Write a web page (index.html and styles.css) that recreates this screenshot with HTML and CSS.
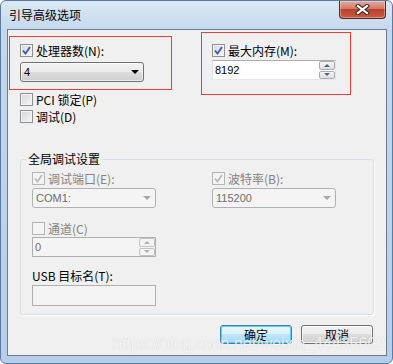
FILE: index.html
```html
<!DOCTYPE html>
<html lang="zh-CN">
  <head>
    <meta charset="UTF-8" />
    <meta name="viewport" content="width=device-width, initial-scale=1.0" />
    <title>引导高级选项</title>
    <link rel="stylesheet" href="styles.css">
  </head>
  <body>
    <div class="window">
      <div class="titlebar">
        <span class="title">引导高级选项</span>
        <span class="close">
          <svg width="15" height="11" viewBox="0 0 15 11">
            <path d="M3 2 L12 9 M12 2 L3 9" stroke="#3b2a2a" stroke-width="4.2" stroke-linecap="square" />
            <path d="M3 2 L12 9 M12 2 L3 9" stroke="#fff" stroke-width="2.2" stroke-linecap="square" />
          </svg>
        </span>
      </div>

      <div class="client">
        <div class="top">
          <div class="col">
            <label class="check">
              <span class="cb"><svg width="9" height="9" viewBox="0 0 9 9"><path d="M1 4.5 L3.5 7.5 L8 1" /></svg></span>
              处理器数(N):
            </label>
            <div class="combo combo-first"><span>4</span><span class="arrow"></span></div>
          </div>
          <div class="col">
            <label class="check">
              <span class="cb"><svg width="9" height="9" viewBox="0 0 9 9"><path d="M1 4.5 L3.5 7.5 L8 1" /></svg></span>
              最大内存(M):
            </label>
            <div class="edit edit-mem">
              <span class="value">8192</span>
              <span class="spin">
                <i class="up"></i>
                <i class="down"></i>
              </span>
            </div>
          </div>
        </div>

        <div class="opts">
          <label class="check"><span class="cb"></span>PCI 锁定(P)</label>
          <label class="check"><span class="cb"></span>调试(D)</label>
        </div>

        <fieldset class="group">
          <legend>全局调试设置</legend>
          <div class="group-row">
            <div class="col">
              <label class="check disabled">
                <span class="cb"><svg width="9" height="9" viewBox="0 0 9 9"><path d="M1 4.5 L3.5 7.5 L8 1" /></svg></span>
                调试端口(E):
              </label>
              <div class="combo disabled"><span>COM1:</span><span class="arrow"></span></div>
            </div>
            <div class="col">
              <label class="check disabled">
                <span class="cb"><svg width="9" height="9" viewBox="0 0 9 9"><path d="M1 4.5 L3.5 7.5 L8 1" /></svg></span>
                波特率(B):
              </label>
              <div class="combo disabled"><span>115200</span><span class="arrow"></span></div>
            </div>
          </div>
          <div class="col col-channel">
            <label class="check disabled"><span class="cb"></span>通道(C)</label>
            <div class="edit disabled edit-channel">
              <span class="value">0</span>
              <span class="spin">
                <i class="up"></i>
                <i class="down"></i>
              </span>
            </div>
          </div>
          <div class="col col-usb">
            <span class="label">USB 目标名(T):</span>
            <div class="edit disabled edit-usb"></div>
          </div>
        </fieldset>

        <div class="buttons">
          <button class="btn btn-default">确定</button>
          <button class="btn">取消</button>
        </div>

        <div class="mark mark-cpu"></div>
        <div class="mark mark-mem"></div>
        <div class="watermark">https://blog.csdn.net/weixin_44435602</div>
      </div>
    </div>
  </body>
</html>
```

FILE: styles.css
```css
body {
  margin: 0;
  font-family: "Noto Sans CJK SC", sans-serif;
  font-size: 12px;
  color: #000;
}
.window {
  width: 393px;
  height: 364px;
  box-sizing: border-box;
  border: 1px solid #5a7ca3;
  border-radius: 6px;
  background: linear-gradient(to bottom, #dce8f5, #c3d8ee 30px, #b6cee9);
  display: flex;
  flex-direction: column;
  overflow: hidden;
}
.titlebar {
  height: 28px;
  display: flex;
  align-items: center;
  padding-left: 8px;
}
.title {
  line-height: 16px;
}
.close {
  margin-left: auto;
  margin-right: 6px;
  align-self: flex-start;
  width: 47px;
  height: 18px;
  box-sizing: border-box;
  border: 1px solid #5b2622;
  border-top: none;
  border-radius: 0 0 4px 4px;
  background: linear-gradient(to bottom, #e6a99e, #d27a6a 45%, #b9412d 50%, #c95a42);
  box-shadow: inset 0 0 0 1px rgba(255, 255, 255, 0.35);
  display: flex;
  align-items: center;
  justify-content: center;
}
.client {
  flex: 1;
  margin: 0 5px 7px 6px;
  border: 1px solid #6b7b91;
  background-color: #f0f0f0;
  position: relative;
  display: flex;
  flex-direction: column;
}

/* top section */
.top {
  display: flex;
  gap: 68px;
  padding: 14px 0 0 12px;
}
.col {
  width: 124px;
  display: flex;
  flex-direction: column;
}
.check {
  display: flex;
  align-items: center;
  gap: 3px;
  height: 13px;
  line-height: 13px;
  white-space: nowrap;
}
.cb {
  width: 13px;
  height: 13px;
  box-sizing: border-box;
  flex: none;
  border: 1px solid #8e8f8f;
  background: linear-gradient(135deg, #d2d5da, #f7f7f7);
  box-shadow: inset 0 0 0 1px #f4f4f4;
  display: flex;
  align-items: center;
  justify-content: center;
}
.cb svg path {
  fill: none;
  stroke: #3d5c9f;
  stroke-width: 1.8;
}
.check.disabled {
  color: #838383;
}
.check.disabled .cb {
  border-color: #b5b5b5;
  background: #f4f4f4;
  box-shadow: none;
}
.check.disabled .cb svg path {
  stroke: #b9b9b9;
}

.combo {
  height: 20px;
  box-sizing: border-box;
  margin-top: 3px;
  border: 1px solid #707070;
  border-radius: 3px;
  background: linear-gradient(to bottom, #f2f2f2, #ebebeb 50%, #dddddd 50%, #cfcfcf);
  box-shadow: inset 0 0 0 1px rgba(255, 255, 255, 0.6);
  display: flex;
  align-items: center;
  padding: 0 4px 0 3px;
  font-family: "Liberation Sans", sans-serif;
  font-size: 11px;
}
.combo-first {
  margin-top: 5px;
}
.combo .arrow {
  margin-left: auto;
  width: 0;
  height: 0;
  border-left: 4px solid transparent;
  border-right: 4px solid transparent;
  border-top: 4px solid #000;
}
.combo.disabled {
  border-color: #adb2b5;
  background: #f4f4f4;
  box-shadow: none;
  color: #6d6d6d;
}
.combo.disabled .arrow {
  border-top-color: #a7a7a7;
}

.edit {
  height: 20px;
  box-sizing: border-box;
  border: 1px solid;
  border-color: #abadb3 #e2e3ea #e3e9ef #dbdfe6;
  background-color: #fff;
  display: flex;
  align-items: center;
  font-family: "Liberation Sans", sans-serif;
  font-size: 11px;
}
.edit .value {
  padding-left: 2px;
}
.edit-mem {
  margin-top: 3px;
}
.spin {
  margin-left: auto;
  width: 16px;
  height: 18px;
  display: flex;
  flex-direction: column;
  gap: 1px;
}
.spin i {
  flex: 1;
  border: 1px solid #acacac;
  border-radius: 2px;
  background: linear-gradient(to bottom, #f6f6f6, #dedede);
  display: flex;
  align-items: center;
  justify-content: center;
}
.spin i::after {
  content: "";
  width: 0;
  height: 0;
  border-left: 3px solid transparent;
  border-right: 3px solid transparent;
}
.spin .up::after {
  border-bottom: 3px solid #4d6185;
}
.spin .down::after {
  border-top: 3px solid #4d6185;
}
.edit.disabled {
  border-color: #afafaf;
  background-color: #f4f4f4;
  color: #6d6d6d;
}
.edit.disabled .spin i {
  border-color: #c3c3c3;
  background: #f4f4f4;
}
.edit.disabled .spin .up::after {
  border-bottom-color: #b0b0b0;
}
.edit.disabled .spin .down::after {
  border-top-color: #b0b0b0;
}

.opts {
  display: flex;
  flex-direction: column;
  gap: 4px;
  padding: 11px 0 0 12px;
}

/* group box */
.group {
  margin: 28px 12px 0 12px;
  padding: 5px 11px 8px 11px;
  border: 1px solid #d5dfe5;
  border-radius: 3px;
  box-shadow: 1px 1px 0 #fff;
}
.group legend {
  padding: 0 2px;
  margin-left: -6px;
  line-height: 16px;
}
.group-row {
  display: flex;
  gap: 56px;
}
.col-channel {
  margin-top: 14px;
}
.edit-channel {
  margin-top: 2px;
}
.col-usb {
  margin-top: 12px;
}
.label {
  height: 13px;
  line-height: 13px;
  white-space: nowrap;
}
.edit-usb {
  margin-top: 3px;
  height: 21px;
  background-color: #f0f0f0;
}

/* buttons */
.buttons {
  display: flex;
  justify-content: flex-end;
  gap: 9px;
  margin: 10px 13px 0 0;
}
.btn {
  width: 72px;
  height: 19px;
  padding: 0;
  font-family: "Noto Sans CJK SC", sans-serif;
  font-size: 12px;
  line-height: 17px;
  color: #000;
  border: 1px solid #707070;
  border-radius: 3px;
  background: linear-gradient(to bottom, #f2f2f2, #ebebeb 50%, #dddddd 50%, #cfcfcf);
  box-shadow: inset 0 0 0 1px rgba(255, 255, 255, 0.7);
}
.btn-default {
  border-color: #3c7fb1;
  background: linear-gradient(to bottom, #eaf6fd, #d9f0fc 50%, #bee6fd 50%, #a7d9f5);
  box-shadow: inset 0 0 0 1px #5ad0f6;
}

/* annotation overlays */
.mark {
  position: absolute;
  border: 1px solid #ef3d3d;
  pointer-events: none;
}
.mark-cpu {
  left: 1px;
  top: 6px;
  width: 161px;
  height: 52px;
}
.mark-mem {
  left: 193px;
  top: 2px;
  width: 148px;
  height: 61px;
}
.watermark {
  position: absolute;
  left: 105px;
  top: 305px;
  font-family: "Liberation Sans", sans-serif;
  font-size: 16px;
  color: rgba(255, 255, 255, 0.8);
  text-shadow: 0 0 1px rgba(120, 120, 120, 0.35);
  white-space: nowrap;
  pointer-events: none;
}
```
